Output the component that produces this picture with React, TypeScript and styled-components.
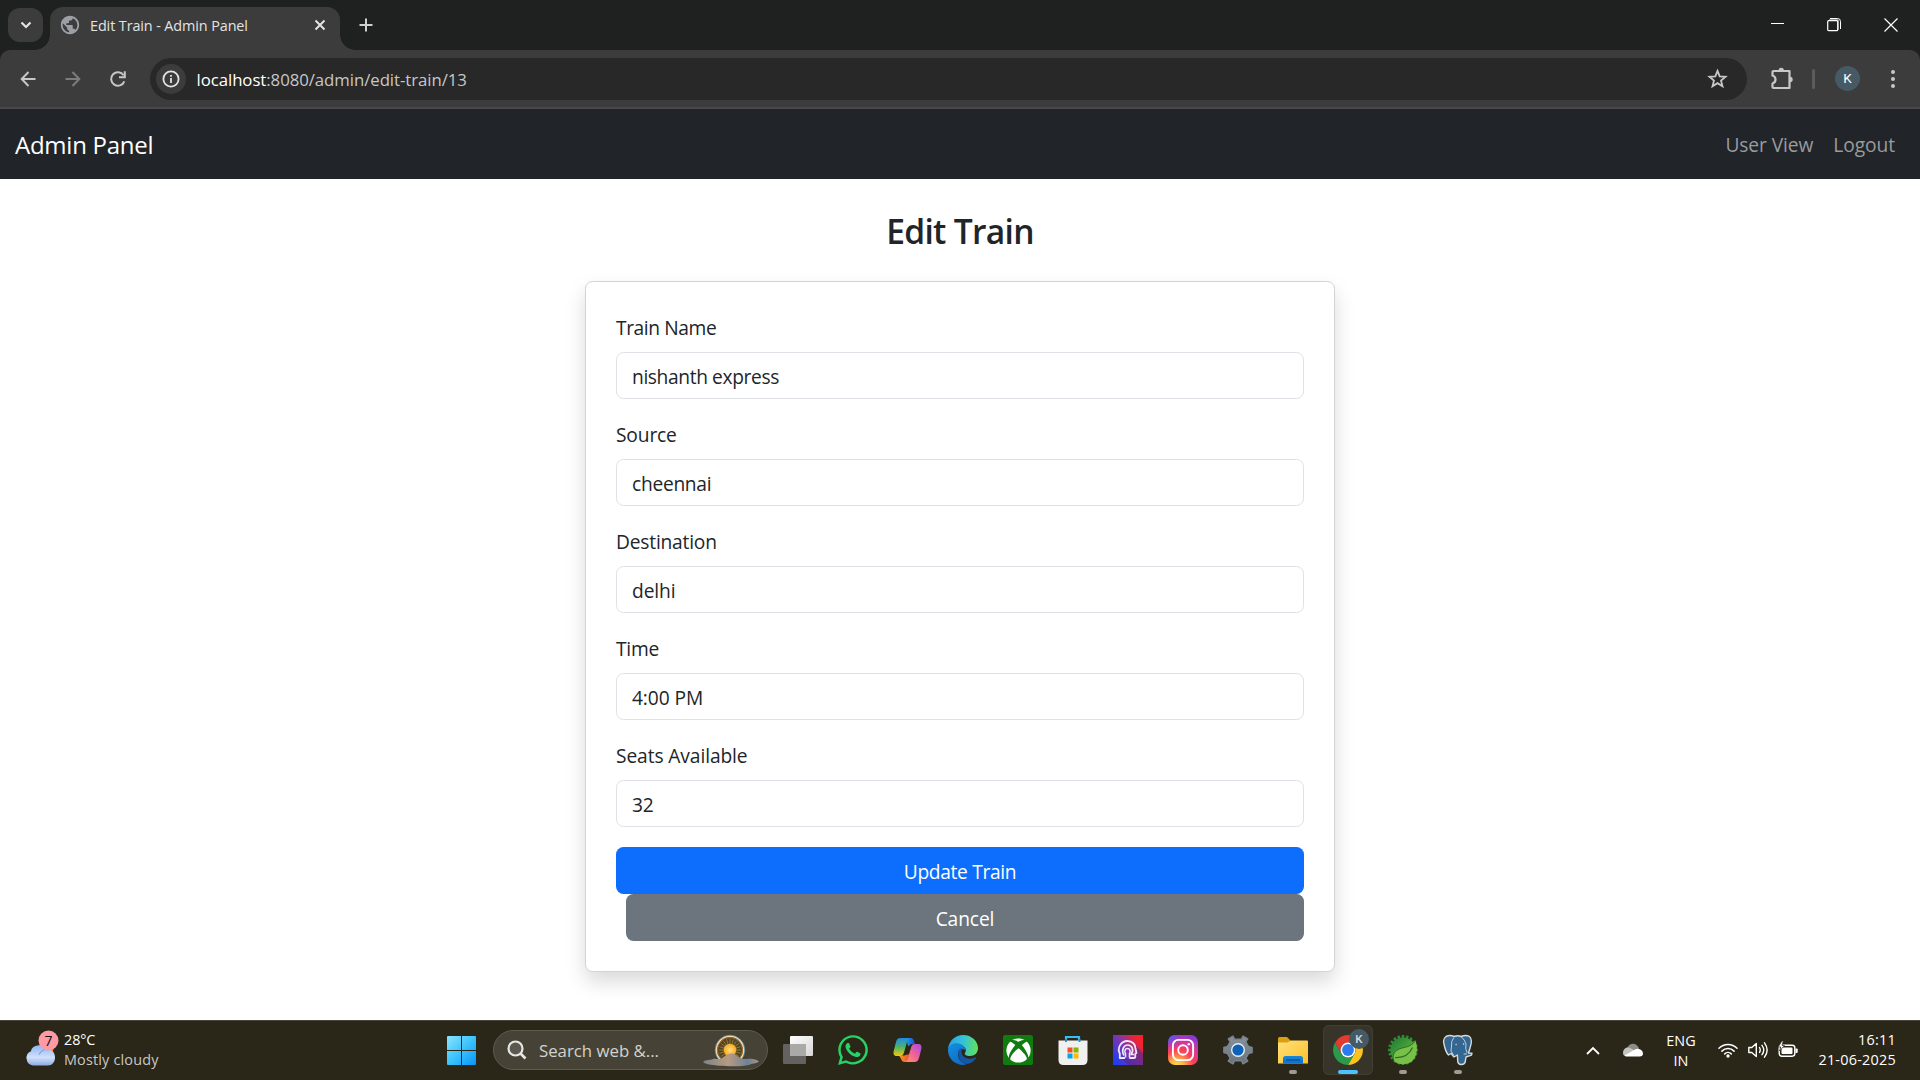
import React from "react";
import styled, { createGlobalStyle, css } from "styled-components";
import { FaWhatsapp, FaXbox } from "react-icons/fa";
import { MdPublic } from "react-icons/md";

const GlobalStyle = createGlobalStyle`
  *, *::before, *::after { box-sizing: border-box; }
  html, body { margin: 0; padding: 0; }
  body {
    font-family: "Open Sans", "Noto Sans", sans-serif;
    background: #fff;
    color: #212529;
    overflow: hidden;
  }
  svg { display: block; }
`;

const Screen = styled.div`
  width: 1920px;
  height: 1080px;
  display: flex;
  flex-direction: column;
  overflow: hidden;
`;

/* ---------- browser chrome ---------- */

const TabStrip = styled.header`
  height: 50px;
  flex: none;
  display: flex;
  align-items: flex-end;
  background: #1f2120;
  padding-left: 8px;
`;

const TabSearch = styled.button`
  width: 35px;
  height: 34px;
  margin: 0 7px 8px 0;
  padding: 0;
  border: 0;
  border-radius: 12px;
  background: #3c3c3c;
  display: grid;
  place-items: center;
`;

const Tab = styled.div`
  position: relative;
  width: 290px;
  height: 43px;
  border-radius: 13px 13px 0 0;
  background: #3c3c3c;
  display: flex;
  align-items: center;
  padding: 0 14px 7px 9px;

  &::before,
  &::after {
    content: "";
    position: absolute;
    bottom: 0;
    width: 15px;
    height: 15px;
  }
  &::before {
    left: -15px;
    background: radial-gradient(circle at 0 0, transparent 14.5px, #3c3c3c 15px);
  }
  &::after {
    right: -15px;
    background: radial-gradient(circle at 100% 0, transparent 14.5px, #3c3c3c 15px);
  }
`;

const TabTitle = styled.span`
  flex: 1;
  margin-left: 9px;
  padding-top: 2px;
  font-size: 14.4px;
  line-height: 20px;
  letter-spacing: -0.1px;
  color: #e3e3e3;
  white-space: nowrap;
`;

const StripIcon = styled.div<{ $w: number }>`
  width: ${(p) => p.$w}px;
  height: 50px;
  display: grid;
  place-items: center;
`;

const WindowControls = styled.div`
  margin-left: auto;
  padding-right: 1px;
  display: flex;
`;

const ToolbarBack = styled.div`
  flex: none;
  background: #1f2120;
`;

const Toolbar = styled.div`
  height: 59px;
  background: #3c3c3c;
  border-radius: 10px 10px 0 0;
  border-bottom: 2px solid #484848;
  display: flex;
  align-items: center;
  padding: 0 5px;
`;

const ToolButton = styled.button`
  width: 45px;
  height: 42px;
  padding: 0;
  border: 0;
  background: none;
  display: grid;
  place-items: center;
`;

const Omnibox = styled.div`
  width: 1597px;
  height: 42px;
  margin: 0 12px 0 10px;
  border-radius: 21px;
  background: #282828;
  display: flex;
  align-items: center;
  padding: 0 18px 0 6px;
`;

const SiteInfo = styled.div`
  width: 30px;
  height: 30px;
  border-radius: 50%;
  background: #3c3c3c;
  display: grid;
  place-items: center;
`;

const Url = styled.span`
  flex: 1;
  margin-left: 10.5px;
  padding-top: 2px;
  font-size: 16.8px;
  line-height: 24px;
  letter-spacing: -0.06px;
  color: #c7c7c7;
  white-space: nowrap;
  b {
    font-weight: 400;
    color: #fff;
  }
`;

const ToolDivider = styled.i`
  width: 3px;
  height: 20px;
  margin: 0 20px 0 8px;
  border-radius: 2px;
  background: #5c5c5c;
`;

const Avatar = styled.span`
  width: 25px;
  height: 25px;
  margin-right: 10px;
  border-radius: 50%;
  background: #455a64;
  color: #fff;
  font: 400 13.5px/25px Roboto, sans-serif;
  text-align: center;
`;

/* ---------- page ---------- */

const Page = styled.main`
  flex: 1;
  min-height: 0;
  background: #fff;
`;

const Navbar = styled.nav`
  height: 70px;
  background: #212529;
  display: flex;
  align-items: center;
  padding: 2px 25px 0 15px;
`;

const Brand = styled.span`
  flex: 1;
  font-size: 24px;
  letter-spacing: -0.25px;
  line-height: 38px;
  color: #fff;
`;

const NavLink = styled.a`
  margin-left: 20px;
  font-size: 19.2px;
  line-height: 30px;
  letter-spacing: -0.08px;
  color: #999b9d;
`;

const Heading = styled.h3`
  margin: 31px 0 29px;
  height: 42px;
  text-align: center;
  font-size: 33.6px;
  line-height: 42px;
  font-weight: 600;
  letter-spacing: -0.7px;
`;

const Card = styled.form`
  width: 750px;
  margin: 0 auto;
  padding: 30px;
  border: 1px solid #d2d3d4;
  border-radius: 7.5px;
  background: #fff;
  box-shadow: 0 10px 20px rgba(0, 0, 0, 0.15);
`;

const Field = styled.label`
  display: block;
  margin-bottom: 20px;
`;

const FieldLabel = styled.span<{ $track: number }>`
  display: block;
  height: 30px;
  margin-bottom: 10px;
  font-size: 19.2px;
  line-height: 31px;
  letter-spacing: ${(p) => p.$track}px;
`;

const Input = styled.input<{ $track: number }>`
  display: block;
  width: 688px;
  height: 47px;
  padding: 2px 15px 0;
  border: 1px solid #dee2e6;
  border-radius: 7.5px;
  background: #fff;
  color: #212529;
  font: 400 19.2px/30px "Open Sans", "Noto Sans", sans-serif;
  letter-spacing: ${(p) => p.$track}px;
  outline: none;
`;

const Button = styled.button<{ $tone: "primary" | "secondary" }>`
  display: block;
  height: 47px;
  width: 688px;
  padding: 2px 0 0;
  border: 0;
  border-radius: 7.5px;
  color: #fff;
  font: 400 19.2px/30px "Open Sans", "Noto Sans", sans-serif;
  letter-spacing: -0.33px;
  background: #0d6efd;
  ${(p) =>
    p.$tone === "secondary" &&
    css`
      width: 678px;
      margin-left: 10px;
      letter-spacing: -0.1px;
      background: #6c757d;
    `}
`;

/* ---------- taskbar ---------- */

const Taskbar = styled.footer`
  flex: none;
  height: 60px;
  display: flex;
  align-items: center;
  background: #2a2618;
  box-shadow: inset 0 1px 0 #44443a;
  color: #fff;
`;

const Weather = styled.div`
  width: 436px;
  display: flex;
  align-items: center;
  padding-left: 24px;
`;

const Lines = styled.div<{ $align?: string; $track?: number }>`
  font-size: 14.4px;
  line-height: 20px;
  letter-spacing: ${(p) => p.$track ?? 0}px;
  white-space: nowrap;
  text-align: ${(p) => p.$align || "left"};
`;

const Muted = styled.div`
  letter-spacing: 0.18px;
  color: #c9c8c4;
`;

const Task = styled.div<{ $active?: boolean }>`
  position: relative;
  flex: none;
  width: 50px;
  height: 50px;
  margin-right: 5px;
  border-radius: 6px;
  display: grid;
  place-items: center;
  ${(p) =>
    p.$active &&
    css`
      background: #37342a;
      box-shadow: inset 0 0 0 1px #413e34;
    `}
`;

const Indicator = styled.i<{ $active?: boolean }>`
  position: absolute;
  bottom: 1px;
  left: 50%;
  transform: translateX(-50%);
  width: ${(p) => (p.$active ? 20 : 8)}px;
  height: 4px;
  border-radius: 2px;
  background: ${(p) => (p.$active ? "#4cc2ff" : "#9d9b94")};
`;

const ProfileBadge = styled.span`
  position: absolute;
  top: 4px;
  right: 4px;
  width: 20px;
  height: 20px;
  border-radius: 50%;
  background: #455a64;
  color: #d5dbde;
  font: 500 11.5px/20px Roboto, sans-serif;
  text-align: center;
`;

const SearchPill = styled.div`
  flex: none;
  width: 275px;
  height: 40px;
  margin: 0 5px 0 2px;
  border: 1px solid #5d5b50;
  border-radius: 20px;
  background: #464336;
  display: flex;
  align-items: center;
  padding: 0 8px 0 13px;
`;

const SearchText = styled.span`
  flex: 1;
  margin-left: 12px;
  padding-top: 2px;
  font-size: 16.8px;
  letter-spacing: 0;
  line-height: 24px;
  color: #d3d2ce;
  white-space: nowrap;
`;

const XboxTile = styled.div`
  width: 30px;
  height: 30px;
  border-radius: 2px;
  background: #107c10;
  color: #fff;
  display: grid;
  place-items: center;
`;

const Tray = styled.div`
  margin-left: auto;
  display: flex;
  align-items: center;
  padding-right: 24px;
`;

const TrayItem = styled.div<{ $ml: number }>`
  margin-left: ${(p) => p.$ml}px;
`;

const Language = styled(TrayItem)`
  width: 30px;
  padding-top: 1px;
`;

const Clock = styled(TrayItem)`
  width: 78px;
`;

/* ---------- drawings ---------- */

const WeatherIcon = () => (
  <svg width="40" height="40" viewBox="0 0 40 40">
    <defs>
      <linearGradient id="wc" x1="0" y1="0" x2="0" y2="1">
        <stop offset="0" stopColor="#8fb6f3" />
        <stop offset=".6" stopColor="#cfe0fb" />
        <stop offset="1" stopColor="#8facdf" />
      </linearGradient>
    </defs>
    <circle cx="22" cy="19" r="7.500" fill="#f7741c" />
    <path d="M9 35.500a7.500 7.500 0 0 1-2-14.300C8 14.500 20 13 23.500 19.500c5-.5 7.500 3.500 7.500 8 0 4.500-3 8-7 8z" fill="url(#wc)" />
    <path d="M15 24.500c2-4 6-6 9.500-4.500" stroke="#7fa3e2" strokeWidth="1.200" fill="none" />
    <circle cx="24.500" cy="10.500" r="10" fill="#ff99a4" />
    <text x="24.500" y="15.500" textAnchor="middle" fontSize="14" fill="#111" fontFamily="Open Sans, sans-serif">7</text>
  </svg>
);

const StartIcon = () => (
  <svg width="29" height="29" viewBox="0 0 29 29">
    <defs>
      <linearGradient id="st" gradientUnits="userSpaceOnUse" x1="0" y1="0" x2="29" y2="29">
        <stop offset="0" stopColor="#8be4ff" />
        <stop offset=".5" stopColor="#3cc3fb" />
        <stop offset="1" stopColor="#0a93fb" />
      </linearGradient>
    </defs>
    <path fill="url(#st)" d="M1 0H14V14H0V1Q0 0 1 0ZM15 0H28Q29 0 29 1V14H15ZM0 15H14V29H1Q0 29 0 28ZM15 15H29V28Q29 29 28 29H15Z" />
  </svg>
);

const RAYS = Array.from({ length: 20 }, (_, i) => (i * Math.PI) / 10);

const SunArt = () => (
  <svg width="56" height="34" viewBox="0 0 56 34">
    <defs>
      <linearGradient id="hz" x1="0" y1="0" x2="1" y2="0">
        <stop offset="0" stopColor="#7b848c" />
        <stop offset=".45" stopColor="#b79a80" />
        <stop offset=".8" stopColor="#6d8299" />
        <stop offset="1" stopColor="#a59484" />
      </linearGradient>
      <radialGradient id="sn">
        <stop offset="0" stopColor="#ffe07a" />
        <stop offset="1" stopColor="#f9a825" />
      </radialGradient>
    </defs>
    <circle cx="27" cy="17" r="13.700" fill="#4d4527" stroke="#f2dcae" strokeWidth="1.600" />
    <circle cx="27" cy="17" r="12.500" fill="none" stroke="#c46a2a" strokeWidth=".8" />
    <circle cx="27" cy="17" r="14.800" fill="none" stroke="#6fb3c4" strokeWidth=".6" />
    {RAYS.map((a) => (
      <line key={a} x1="27" y1="17" x2={27 + 11 * Math.cos(a)} y2={17 + 11 * Math.sin(a)} stroke="#a9842c" strokeWidth=".8" />
    ))}
    <circle cx="27" cy="17" r="6.300" fill="url(#sn)" />
    <path d="M0 29c3-3 7-1.500 10-3 3-1.200 5 1.500 9-1 3-1.500 8-7 14-3 4 3.500 8 4.500 11 4 5-.8 9 0 12 2.500-3 2.500-7 1.500-10 3.500-8 2-22 1.200-30 .8-5-1-11-.3-16-3.800z" fill="url(#hz)" />
  </svg>
);

const TaskViewIcon = () => (
  <svg width="30" height="30" viewBox="0 0 30 30">
    <defs>
      <linearGradient id="tv" x1="0" y1="0" x2="1" y2="1">
        <stop offset="0" stopColor="#fff" />
        <stop offset="1" stopColor="#d6d6d6" />
      </linearGradient>
    </defs>
    <rect x="0" y="9" width="23" height="20" rx="1" fill="#636261" />
    <rect x="7" y="1" width="23" height="20" rx="1" fill="url(#tv)" />
    <rect x="7" y="9" width="16" height="12" fill="#a9a9a8" />
  </svg>
);

const CopilotIcon = () => (
  <svg width="30" height="28" viewBox="0 0 30 28">
    <defs>
      <linearGradient id="ca" x1="0" y1="0" x2="0" y2="1">
        <stop offset="0" stopColor="#1f8be8" />
        <stop offset=".5" stopColor="#4bb36a" />
        <stop offset="1" stopColor="#f7c90c" />
      </linearGradient>
      <linearGradient id="cb" x1="1" y1="0" x2="0" y2="1">
        <stop offset="0" stopColor="#a24bea" />
        <stop offset=".5" stopColor="#f0609a" />
        <stop offset="1" stopColor="#ff9a5a" />
      </linearGradient>
      <linearGradient id="cc" x1="0" y1="0" x2="1" y2="0">
        <stop offset="0" stopColor="#1a9af2" />
        <stop offset="1" stopColor="#1c50d8" />
      </linearGradient>
      <linearGradient id="cd" x1="0" y1="0" x2="1" y2="0">
        <stop offset="0" stopColor="#f4a11c" />
        <stop offset="1" stopColor="#ee4a38" />
      </linearGradient>
    </defs>
    <path d="M13 2h4.500c2 0 3 1.200 3.500 3l1 3h-3c-2 0-3 1-3.700 3z" fill="url(#cc)" />
    <path d="M6 19.500h5c2 0 3-1 3.600-3L17 8c-.5 6 0 14-4 18h-1.500c-2 0-2.800-1.400-3.300-3z" fill="url(#cd)" />
    <path d="M7.500 2H17c-1.700.6-2.500 2-3 4l-3 10.500c-.7 2.500-2 3.500-4 3.500H4c-3 0-4-2-3.300-5L3 6c.7-2.500 2-4 4.500-4z" fill="url(#ca)" />
    <path d="M21.500 26H12c1.700-.6 2.500-2 3-4l3-10.500c.7-2.500 2-3.500 4-3.500h3c3 0 4 2 3.300 5L26 22c-.7 2.500-2 4-4.500 4z" fill="url(#cb)" />
    <path d="M12.300 18.500l2.700-8.500h3.300l-2.600 8.500z" fill="#2a2618" />
  </svg>
);

const EdgeIcon = () => (
  <svg width="30" height="30" viewBox="0 0 30 30">
    <defs>
      <linearGradient id="ea" x1="0" y1=".3" x2="1" y2=".4">
        <stop offset="0" stopColor="#2a9fe6" />
        <stop offset=".5" stopColor="#35c1d8" />
        <stop offset="1" stopColor="#62e05c" />
      </linearGradient>
      <linearGradient id="eb" x1="0" y1="0" x2=".6" y2="1">
        <stop offset="0" stopColor="#1490df" />
        <stop offset="1" stopColor="#0f6cc7" />
      </linearGradient>
    </defs>
    <path d="M0 14C1 5.500 7.500 0 15 0c9 0 15 6.500 15 13 0 5-3.500 8-8 8-4 0-6-1.500-5-3 2-3 .5-6.500-4-8C8 8.500 2 10 0 14z" fill="url(#ea)" />
    <path d="M0 14C1.500 9.500 6.500 7.500 11 8.500c4.500 1 6.500 4 6 7-1-2.500-6.500-2.500-7 3-.4 5 3.500 9.500 8.500 10.500-1.100.7-2.300 1-3.500 1C6.500 30-.5 23 0 14z" fill="url(#eb)" />
    <path d="M11.500 14c-3.500 6 .5 14.500 8 15 3.500-.6 7-3 8.700-6 .3-.7-.2-1-.8-.6-6 3.100-13.500.6-13.900-5.400-.1-1.500.5-2.500 1.500-3-1.300-.7-2.700-.6-3.500 0z" fill="#1457a8" />
  </svg>
);

const StoreIcon = () => (
  <svg width="30" height="30" viewBox="0 0 30 30">
    <path d="M8 7V2h13v5" fill="none" stroke="#35bdf5" strokeWidth="2.200" />
    <path d="M.5 5.500h29V25q0 5-5 5H5.500q-5 0-5-5z" fill="#f0f0f0" />
    <path d="M8 7V4M21.500 7V4" stroke="#1c93d1" strokeWidth="2" />
    <path d="M9.500 12.500h5v5h-5z" fill="#f25022" />
    <path d="M15.500 12.500h5v5h-5z" fill="#7fba00" />
    <path d="M9.500 18.500h5v5h-5z" fill="#00a4ef" />
    <path d="M15.500 18.500h5v5h-5z" fill="#ffb900" />
  </svg>
);

const HeadIcon = () => (
  <svg width="30" height="30" viewBox="0 0 30 30">
    <defs>
      <linearGradient id="hd" x1="0" y1=".8" x2="1" y2=".1">
        <stop offset="0" stopColor="#1d3df6" />
        <stop offset=".5" stopColor="#8a34a4" />
        <stop offset=".85" stopColor="#f4222c" />
      </linearGradient>
    </defs>
    <path d="M0 0h30v30H0z" fill="url(#hd)" />
    <path d="M8 23l7 7h15V18l-7-7v10l-4 3z" fill="#4d2485" opacity=".55" />
    <g fill="none" stroke="#ece7f8" strokeLinejoin="round">
      <path d="M12 23H6.800v-4.500C4 13.500 7.500 6 14.500 6c5 0 8 3.500 8 7.500l1 4.500-1.200.7V22c0 .8-.6 1-1.500 1h-4.500" strokeWidth="1.800" />
      <path d="M11 20.500C8 15.500 10.500 10 14.700 10s6.800 5 3.300 9.500H21" strokeWidth="1.700" />
      <path d="M12.500 22.500v-4c-1.500-2-.5-5 2-5s3.500 3 2 5v4" strokeWidth="1.500" />
    </g>
  </svg>
);

const InstagramIcon = () => (
  <svg width="30" height="30" viewBox="0 0 30 30">
    <defs>
      <radialGradient id="ig" cx=".3" cy="1.050" r="1.100">
        <stop offset="0" stopColor="#ffdd55" />
        <stop offset=".2" stopColor="#ffb545" />
        <stop offset=".5" stopColor="#fb3f57" />
        <stop offset=".8" stopColor="#c837ab" />
        <stop offset="1" stopColor="#8a3ad0" />
      </radialGradient>
      <radialGradient id="ih" cx="0" cy="0" r=".5">
        <stop offset="0" stopColor="#3771ff" />
        <stop offset="1" stopColor="#6a3be0" stopOpacity="0" />
      </radialGradient>
    </defs>
    <rect width="30" height="30" rx="7" fill="url(#ig)" />
    <rect width="30" height="30" rx="7" fill="url(#ih)" />
    <rect x="4.900" y="4.900" width="20.200" height="20.200" rx="5.500" fill="none" stroke="#fff" strokeWidth="1.900" />
    <circle cx="15" cy="15" r="4.800" fill="none" stroke="#fff" strokeWidth="1.900" />
    <circle cx="20.800" cy="9.200" r="1.300" fill="#fff" />
  </svg>
);

const GearIcon = () => (
  <svg width="30" height="30" viewBox="0 0 30 30">
    <defs>
      <linearGradient id="gr" x1="0" y1="0" x2="0" y2="1">
        <stop offset="0" stopColor="#88929b" />
        <stop offset="1" stopColor="#69737c" />
      </linearGradient>
    </defs>
    <path
      d="M11.500 4.300L10 1.200 5.300 3.900l1.900 3-2.700 4.600-3.600 1v5l3.600 1 2.700 4.600-1.900 3L10 28.800l1.500-3.100h7l1.500 3.100 4.700-2.700-1.900-3 2.700-4.600 3.600-1v-5l-3.600-1-2.700-4.600 1.900-3L20 1.200l-1.500 3.100z"
      fill="url(#gr)"
      stroke="#79838c"
      strokeLinejoin="round"
      strokeWidth="1.500"
    />
    <circle cx="15" cy="15" r="7" fill="#e9edf0" />
    <circle cx="15" cy="15" r="5.600" fill="#0c62b8" />
  </svg>
);

const FolderIcon = () => (
  <svg width="30" height="30" viewBox="0 0 30 30">
    <defs>
      <linearGradient id="fo" x1="0" y1="0" x2="1" y2="1">
        <stop offset="0" stopColor="#ffe27a" />
        <stop offset="1" stopColor="#fcbf29" />
      </linearGradient>
      <linearGradient id="fb" x1="0" y1="0" x2="0" y2="1">
        <stop offset="0" stopColor="#1687d9" />
        <stop offset="1" stopColor="#0f6fc6" />
      </linearGradient>
    </defs>
    <path d="M0 3.500Q0 2 1.500 2H9l3.500 3.500v6H0z" fill="#dd9f12" />
    <path d="M0 7.500h9.500L13 5.500h16q1 0 1 1v22H0z" fill="url(#fo)" />
    <path d="M5 28.500v-5q0-2.500 2.500-2.500h15q2.500 0 2.500 2.500v5z" fill="url(#fb)" />
    <path d="M8 25h14" stroke="#0a4f95" strokeWidth="1.300" />
  </svg>
);

const ChromeIcon = () => (
  <svg width="30" height="30" viewBox="0 0 30 30">
    <path d="M2.010 7.500A15 15 0 0 1 27.990 7.500H15A7.500 7.500 0 0 0 8.500 11.250z" fill="#e33b2e" />
    <path d="M27.990 7.500A15 15 0 0 1 15 30L21.500 18.750A7.500 7.500 0 0 0 21.500 11.250L19 7.500z" fill="#fcc31e" />
    <path d="M15 30A15 15 0 0 1 2.010 7.500L8.500 18.750A7.500 7.500 0 0 0 21.500 18.750z" fill="#2a9b4b" />
    <path d="M2.010 7.500L8.500 18.750V11.250L15 7.500z" fill="#e33b2e" />
    <circle cx="15" cy="15" r="7.400" fill="#fff" />
    <circle cx="15" cy="15" r="5.900" fill="#2c7bea" />
  </svg>
);

const TEETH = Array.from({ length: 20 }, (_, i) => i * 18);

const SpringIcon = () => (
  <svg width="30" height="30" viewBox="0 0 30 30">
    <defs>
      <linearGradient id="sp" x1="0" y1="0" x2="1" y2="1">
        <stop offset="0" stopColor="#1c7a33" />
        <stop offset=".6" stopColor="#4fa63b" />
      </linearGradient>
    </defs>
    {TEETH.map((t) => (
      <rect key={t} x="13.700" y="0" width="2.600" height="5" fill="#2f8a37" transform={`rotate(${t} 15 15)`} />
    ))}
    <circle cx="15" cy="15" r="12.600" fill="url(#sp)" />
    <path d="M27.500 5.500c3 9 1 17-4 21-5 3.800-14 3.800-17.500-1-2-4-.5-9 5-11.500 5.500-2.200 12-1.500 16.500-8.500z" fill="#78c146" />
    <path d="M7 22.500c7 .5 14-2.500 17.500-10" fill="none" stroke="#246f2c" strokeWidth="1.200" />
    <path d="M27.500 5.500c-4.500 7-11 6.300-16.500 8.500-5.500 2.500-7 7.500-5 11.500" fill="none" stroke="#246f2c" strokeWidth="1" />
  </svg>
);

const PostgresIcon = () => (
  <svg width="32" height="32" viewBox="-1 -1 32 32">
    <path d="M3 1.500Q7-.5 11 1.500 15 0 18 1.500 23-.5 26.500 1.500 30 4.500 27 13l-1.500 5 3.500.2-.5 2-5.500 1.800-.8 5q-1 3-4.500 2.500-3-.5-3-3.500l-.3-6L11 22 8 18.500 5.500 20Q2.500 17 1 9-.500 4 3 1.500z" fill="#336791" stroke="#d3d9dd" strokeWidth="1.400" strokeLinejoin="round" />
    <path d="M10.500 3Q8 6 8.500 11l-.5 5 2.500 4M18.500 2Q22 5 23 9l-.3 4.500 1.300 4M23.500 19h-2.500" fill="none" stroke="#d3d9dd" strokeWidth=".9" strokeLinecap="round" />
    <path d="M12.500 9.500h1.200M20 9h1.200" stroke="#d3d9dd" strokeWidth="1.300" />
  </svg>
);

const FIELDS = [
  { label: "Train Name", labelTrack: -0.4, value: "nishanth express", valueTrack: -0.38 },
  { label: "Source", labelTrack: -0.15, value: "cheennai", valueTrack: -0.28 },
  { label: "Destination", labelTrack: -0.2, value: "delhi", valueTrack: -0.1 },
  { label: "Time", labelTrack: -0.2, value: "4:00 PM", valueTrack: -0.1 },
  { label: "Seats Available", labelTrack: -0.1, value: "32", valueTrack: -0.1 },
];

const Chrome = () => (
  <>
    <TabStrip>
      <TabSearch>
        <svg width="12" height="8" viewBox="0 0 12 8">
          <path d="M1.500 1.500L6 6l4.500-4.500" fill="none" stroke="#e3e3e3" strokeWidth="2.200" />
        </svg>
      </TabSearch>
      <Tab>
        <MdPublic size={22} color="#9aa0a6" />
        <TabTitle>Edit Train - Admin Panel</TabTitle>
        <svg width="12" height="12" viewBox="0 0 12 12">
          <path d="M1.500 1.500l9 9M10.500 1.500l-9 9" stroke="#e3e3e3" strokeWidth="2" />
        </svg>
      </Tab>
      <StripIcon $w={51}>
        <svg width="14" height="14" viewBox="0 0 14 14">
          <path d="M7 .5v13M.5 7h13" stroke="#d0d0d0" strokeWidth="2" />
        </svg>
      </StripIcon>
      <WindowControls>
        <StripIcon $w={54}>
          <svg width="14" height="14" viewBox="0 0 14 14">
            <path d="M0 5.500h13" stroke="#fff" />
          </svg>
        </StripIcon>
        <StripIcon $w={57}>
          <svg width="14" height="14" viewBox="0 0 14 14">
            <rect x="2" y="1" width="9" height="2" fill="#8d8d8d" />
            <rect x="10" y="2" width="2" height="10" fill="#8d8d8d" />
            <path d="M3 .5h7.500q3 0 3 3V11" fill="none" stroke="#fff" />
            <rect x=".7" y="2.700" width="10" height="10" rx="1" fill="#1f2120" stroke="#fff" strokeWidth="1.200" />
          </svg>
        </StripIcon>
        <StripIcon $w={57}>
          <svg width="14" height="14" viewBox="0 0 14 14">
            <path d="M.5 .5l13 13M13.500 .5l-13 13" stroke="#fff" strokeWidth="1.200" />
          </svg>
        </StripIcon>
      </WindowControls>
    </TabStrip>
    <ToolbarBack>
      <Toolbar>
        <ToolButton>
          <svg width="16" height="16" viewBox="0 0 16 16">
            <path d="M8.500 1L1.700 8l6.800 7M1.700 8H15.500" fill="none" stroke="#c7c7c7" strokeWidth="2" />
          </svg>
        </ToolButton>
        <ToolButton>
          <svg width="16" height="16" viewBox="0 0 16 16">
            <path d="M7.500 1l6.800 7-6.800 7M14.300 8H.5" fill="none" stroke="#7c7c7c" strokeWidth="2" />
          </svg>
        </ToolButton>
        <ToolButton>
          <svg width="18" height="18" viewBox="0 0 18 18">
            <path d="M15.300 11.300A6.800 6.800 0 1 1 14.600 5.200" fill="none" stroke="#c7c7c7" strokeWidth="2" />
            <path d="M15.800 1.300v6H10" fill="none" stroke="#c7c7c7" strokeWidth="2" />
          </svg>
        </ToolButton>
        <Omnibox>
          <SiteInfo>
            <svg width="18" height="18" viewBox="0 0 18 18">
              <circle cx="9" cy="9" r="7.600" fill="none" stroke="#e3e3e3" strokeWidth="1.800" />
              <path d="M9 8v5M9 5v1.800" stroke="#e3e3e3" strokeWidth="1.800" />
            </svg>
          </SiteInfo>
          <Url>
            <b>localhost</b>:8080/admin/edit-train/13
          </Url>
          <svg width="23" height="23" viewBox="0 0 24 24">
            <path d="M12 4l2.300 5.700 6.100.5-4.700 4 1.500 6-5.200-3.300L6.800 20.200l1.500-6-4.700-4 6.100-.5z" fill="none" stroke="#c7c7c7" strokeWidth="1.900" />
          </svg>
        </Omnibox>
        <ToolButton>
          <svg width="23" height="23" viewBox="0 0 23 23">
            <path d="M3.500 4H19.500V21H3.500Q2.500 21 2.500 20V16.500Q5.500 15.500 5.500 12.500 5.500 9.500 2.500 8.500V5Q2.500 4 3.500 4Z" fill="none" stroke="#c7c7c7" strokeWidth="2.200" strokeLinejoin="round" />
            <path d="M8.500 3.500a2.700 2.700 0 0 1 5.400 0zM20 9.800a2.700 2.700 0 0 1 0 5.400z" fill="#c7c7c7" />
          </svg>
        </ToolButton>
        <ToolDivider />
        <Avatar>K</Avatar>
        <ToolButton>
          <svg width="4" height="20" viewBox="0 0 4 20">
            <g fill="#c7c7c7">
              <circle cx="2" cy="3" r="2" />
              <circle cx="2" cy="10" r="2" />
              <circle cx="2" cy="17" r="2" />
            </g>
          </svg>
        </ToolButton>
      </Toolbar>
    </ToolbarBack>
  </>
);

const Bottom = () => (
  <Taskbar>
    <Weather>
      <WeatherIcon />
      <Lines $track={-0.1}>
        <div>28°C</div>
        <Muted>Mostly cloudy</Muted>
      </Lines>
    </Weather>
    <Task>
      <StartIcon />
    </Task>
    <SearchPill>
      <svg width="20" height="20" viewBox="0 0 20 20">
        <circle cx="8.500" cy="8.500" r="7" fill="#5b594e" stroke="#e6e6e4" strokeWidth="2.200" />
        <path d="M13.500 13.500L18.500 18.500" stroke="#e6e6e4" strokeWidth="2.600" />
      </svg>
      <SearchText>Search web &amp;...</SearchText>
      <SunArt />
    </SearchPill>
    <Task>
      <TaskViewIcon />
    </Task>
    <Task>
      <FaWhatsapp size={34} color="#25d366" />
    </Task>
    <Task>
      <CopilotIcon />
    </Task>
    <Task>
      <EdgeIcon />
    </Task>
    <Task>
      <XboxTile>
        <FaXbox size={25} />
      </XboxTile>
    </Task>
    <Task>
      <StoreIcon />
    </Task>
    <Task>
      <HeadIcon />
    </Task>
    <Task>
      <InstagramIcon />
    </Task>
    <Task>
      <GearIcon />
    </Task>
    <Task>
      <FolderIcon />
      <Indicator />
    </Task>
    <Task $active>
      <ChromeIcon />
      <ProfileBadge>K</ProfileBadge>
      <Indicator $active />
    </Task>
    <Task>
      <SpringIcon />
      <Indicator />
    </Task>
    <Task>
      <PostgresIcon />
      <Indicator />
    </Task>
    <Tray>
      <svg width="14" height="9" viewBox="0 0 14 9">
        <path d="M1 8l6-6 6 6" fill="none" stroke="#fff" strokeWidth="1.800" />
      </svg>
      <TrayItem $ml={23}>
        <svg width="20" height="14" viewBox="0 0 20 14">
          <path d="M4 5.500C6-1 14-1 16 5.500L10 9z" fill="#8e8c86" />
          <path d="M0 10C0 5 5 3 8 5.500L13 8 3 13Q0 13 0 10z" fill="#c4c3c0" />
          <path d="M1.500 12.500L12 6.500q2.500-1.500 5-.2 3 1.500 3 4 0 3.200-3.500 3.200h-13q-1.500-.2-2-1z" fill="#fff" />
        </svg>
      </TrayItem>
      <Language $ml={23}>
        <Lines $align="center">
          <div>ENG</div>
          <div>IN</div>
        </Lines>
      </Language>
      <TrayItem $ml={22}>
        <svg width="20" height="16" viewBox="0 0 20 16">
          <g fill="none" stroke="#fff" strokeWidth="1.500" strokeLinecap="round">
            <path d="M1 6.200a12.700 12.700 0 0 1 18 0" />
            <path d="M3.900 9.100a8.600 8.600 0 0 1 12.200 0" />
            <path d="M6.700 11.900a4.700 4.700 0 0 1 6.600 0" />
          </g>
          <circle cx="10" cy="14" r="1.700" fill="#fff" />
        </svg>
      </TrayItem>
      <TrayItem $ml={10}>
        <svg width="20" height="18" viewBox="0 0 20 18">
          <g fill="none" stroke="#fff" strokeWidth="1.400" strokeLinecap="round" strokeLinejoin="round">
            <path d="M.8 6.500h3L8.300 2.500v13L3.800 11.500h-3z" />
            <path d="M11.500 6.500q1.500 2.500 0 5M14 4.300q3.500 4.700 0 9.400M16.500 1.800q5.300 7.200 0 14.400" />
          </g>
        </svg>
      </TrayItem>
      <TrayItem $ml={10}>
        <svg width="20" height="18" viewBox="0 0 20 18">
          <rect x="1.200" y="4.200" width="15.600" height="11" rx="2.600" fill="none" stroke="#fff" strokeWidth="1.400" />
          <rect x="3.500" y="6.500" width="11" height="6.500" rx="1" fill="#fff" />
          <path d="M17.500 7.500h1.200q1 0 1 1v2.500q0 1-1 1h-1.200z" fill="#fff" />
          <path d="M3.800 0L.3 6h2.500L1.500 10 6.500 4.500H4L5.300 0z" fill="#fff" stroke="#2a2618" strokeWidth=".7" />
        </svg>
      </TrayItem>
      <Clock $ml={20}>
        <Lines $align="right" $track={0.25}>
          <div>16:11</div>
          <div>21-06-2025</div>
        </Lines>
      </Clock>
    </Tray>
  </Taskbar>
);

export default function App() {
  return (
    <Screen>
      <GlobalStyle />
      <Chrome />
      <Page>
        <Navbar>
          <Brand>Admin Panel</Brand>
          <NavLink>User View</NavLink>
          <NavLink>Logout</NavLink>
        </Navbar>
        <Heading>Edit Train</Heading>
        <Card>
          {FIELDS.map((f) => (
            <Field key={f.label}>
              <FieldLabel $track={f.labelTrack}>{f.label}</FieldLabel>
              <Input $track={f.valueTrack} defaultValue={f.value} />
            </Field>
          ))}
          <Button type="button" $tone="primary">
            Update Train
          </Button>
          <Button type="button" $tone="secondary">
            Cancel
          </Button>
        </Card>
      </Page>
      <Bottom />
    </Screen>
  );
}
